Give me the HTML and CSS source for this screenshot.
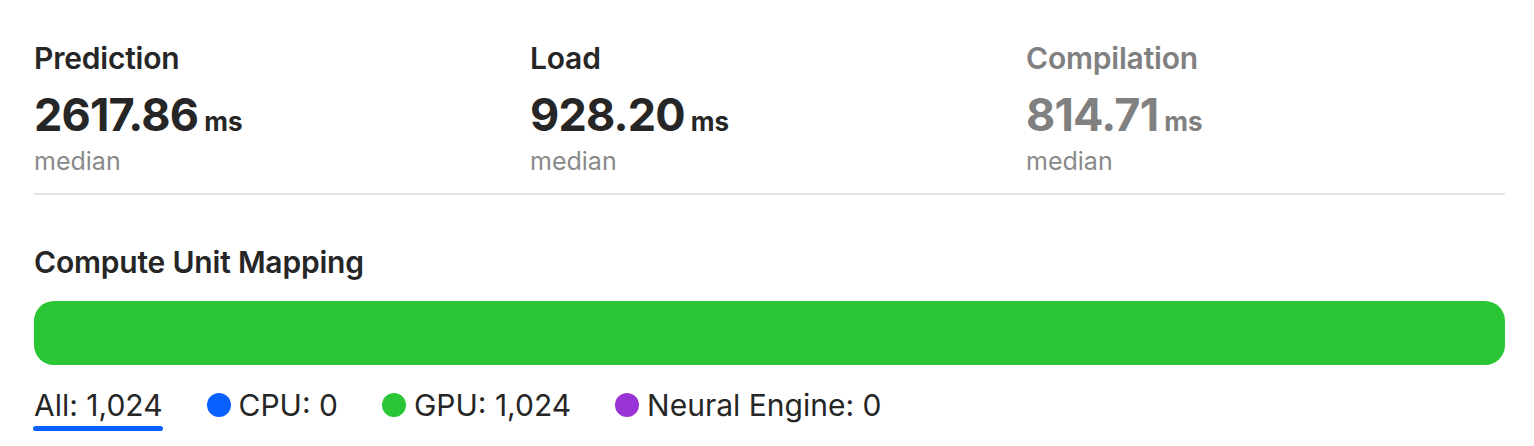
FILE: index.html
```html
<!DOCTYPE html>
<html lang="en">
<head>
<meta charset="utf-8">
<title>Performance</title>
<link rel="stylesheet" href="styles.css">
</head>
<body>
<main class="report">
  <section class="stats">
    <div class="stat">
      <div class="stat-label">Prediction</div>
      <div class="stat-value"><span class="num">2617.86</span><span class="unit">ms</span></div>
      <div class="stat-sub">median</div>
    </div>
    <div class="stat">
      <div class="stat-label">Load</div>
      <div class="stat-value"><span class="num">928.20</span><span class="unit">ms</span></div>
      <div class="stat-sub">median</div>
    </div>
    <div class="stat stat-muted">
      <div class="stat-label">Compilation</div>
      <div class="stat-value"><span class="num">814.71</span><span class="unit">ms</span></div>
      <div class="stat-sub">median</div>
    </div>
  </section>
  <hr class="divider">
  <section class="mapping">
    <h2 class="mapping-title">Compute Unit Mapping</h2>
    <div class="bar"><div class="bar-seg seg-gpu" style="width:100%"></div></div>
    <div class="legend">
      <div class="legend-tab">
        <span class="legend-item">All: 1,024</span>
        <span class="tab-indicator"></span>
      </div>
      <span class="legend-item"><span class="dot dot-cpu"></span>CPU: 0</span>
      <span class="legend-item"><span class="dot dot-gpu"></span>GPU: 1,024</span>
      <span class="legend-item"><span class="dot dot-ane"></span>Neural Engine: 0</span>
    </div>
  </section>
</main>
</body>
</html>
```

FILE: styles.css
```css
* { box-sizing: border-box; }
html, body { margin: 0; padding: 0; background: #fff; }
body {
  font-family: Inter, "Noto Sans", "Liberation Sans", sans-serif;
  color: #262626;
}
.report {
  width: 1471px;
  margin-left: 34px;
  padding-top: 40px;
}
.stats {
  display: grid;
  grid-template-columns: repeat(3, 1fr);
  column-gap: 17px;
}
.stat-label {
  font-size: 30px;
  line-height: 36px;
  font-weight: 600;
  letter-spacing: -0.2px;
}
.stat-value {
  margin-top: 12px;
  display: flex;
  align-items: baseline;
  gap: 6px;
  line-height: 54px;
}
.num {
  font-size: 45px;
  font-weight: 700;
  letter-spacing: -0.8px;
}
.unit {
  font-size: 26px;
  font-weight: 700;
}
.stat-sub {
  margin-top: -2px;
  font-size: 25px;
  line-height: 28px;
  color: #8a8a8a;
}
.stat-muted { color: #808080; }
.divider {
  border: 0;
  height: 2px;
  background: #e4e4e4;
  margin: 18px 0 0;
}
.mapping-title {
  margin: 49px 0 0;
  font-size: 30px;
  line-height: 36px;
  font-weight: 600;
  letter-spacing: -0.2px;
}
.bar {
  margin-top: 21px;
  height: 64px;
  border-radius: 20px;
  overflow: hidden;
  display: flex;
  background: #e8e8e8;
}
.bar-seg { height: 100%; }
.seg-gpu { background: #2ac635; }
.legend {
  margin-top: 22px;
  display: flex;
  align-items: flex-start;
  gap: 44px;
  font-size: 30px;
  line-height: 36px;
}
.legend-tab {
  display: flex;
  flex-direction: column;
  align-items: stretch;
}
.tab-indicator {
  display: block;
  height: 5px;
  margin: 3px 0 0 -1px;
  border-radius: 3px;
  background: #0a60ff;
}
.legend-item {
  display: inline-flex;
  align-items: center;
  gap: 8px;
}
.dot {
  width: 24px;
  height: 24px;
  border-radius: 50%;
  display: inline-block;
}
.dot-cpu { background: #0a60ff; }
.dot-gpu { background: #2ac635; }
.dot-ane { background: #9b34d6; }
```
